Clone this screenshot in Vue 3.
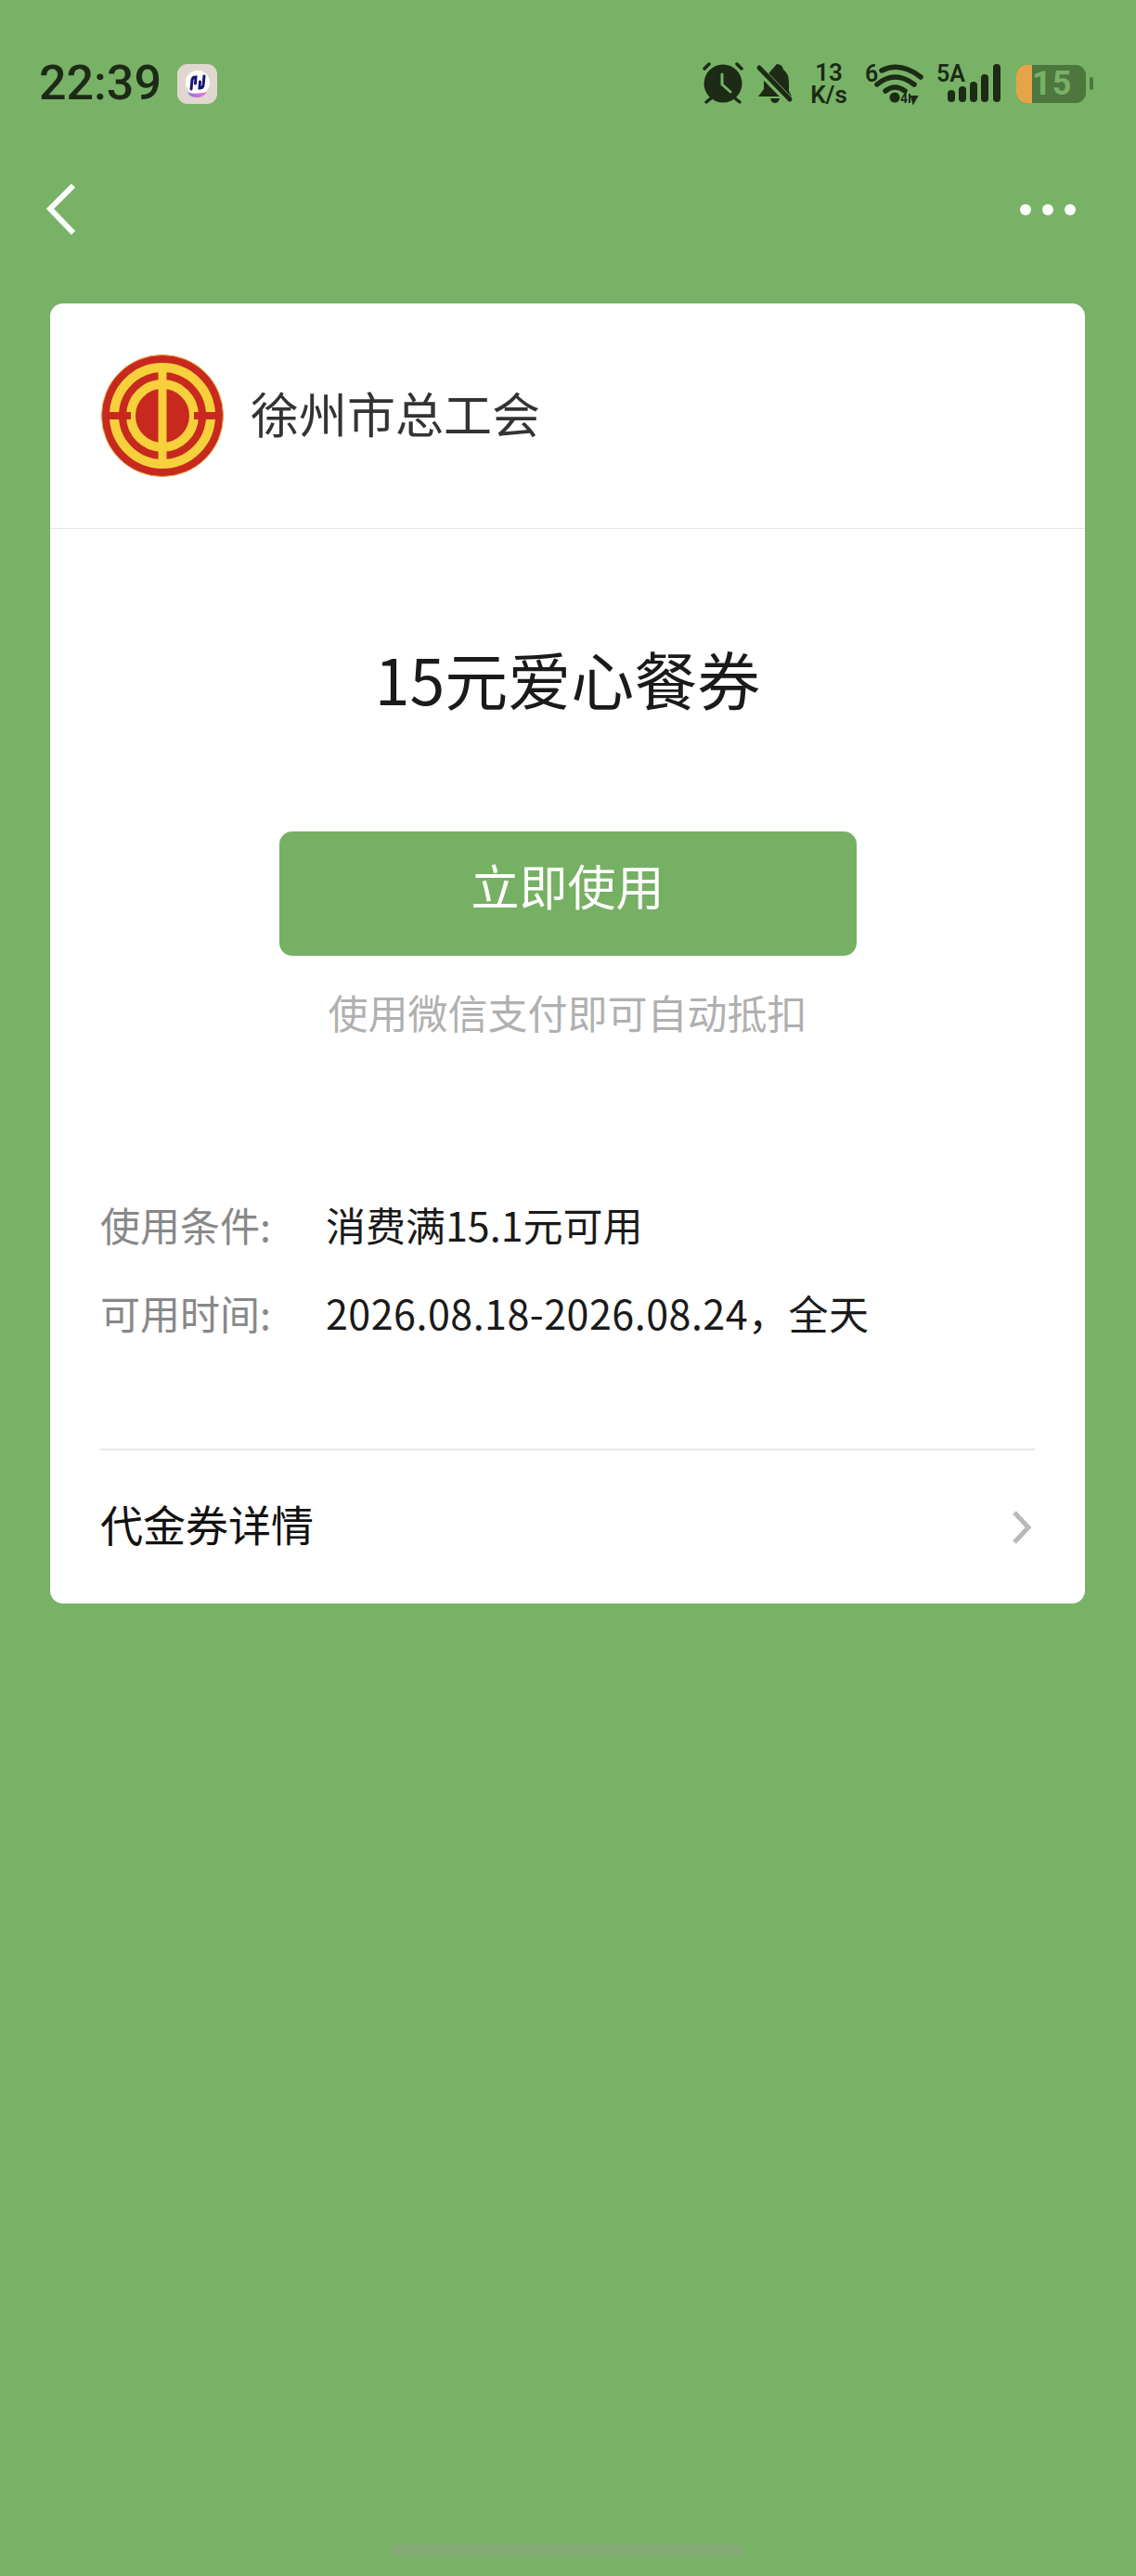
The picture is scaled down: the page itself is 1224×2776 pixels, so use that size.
<script setup>
const rows = [
  { label: "使用条件:", value: "消费满15.1元可用" },
  { label: "可用时间:", value: "2026.08.18-2026.08.24，全天" },
];
</script>

<template>
  <div class="page">
    <div class="status">
      <div class="status-left">
        <span class="time">22:39</span>
        <span class="app-icon">
          <svg width="43" height="43" viewBox="0 0 43 43">
            <defs>
              <linearGradient id="wave" x1="0" x2="1" y1="0" y2="0">
                <stop offset="0" stop-color="#7d7be8" />
                <stop offset="0.6" stop-color="#d36ce0" />
                <stop offset="1" stop-color="#e78fc8" />
              </linearGradient>
            </defs>
            <circle cx="22" cy="20" r="13" fill="#fff" />
            <path d="M15 27L16 17Q16.500 14 20 14L19.500 21" fill="none" stroke="#1a1570" stroke-width="3" stroke-linecap="round" />
            <path d="M29 13L28 23Q27.500 26 24 26L24.500 19" fill="none" stroke="#1a1570" stroke-width="3" stroke-linecap="round" />
            <path d="M11 31Q21 33 32 30Q29 36 21 36Q14 36 11 31Z" fill="url(#wave)" />
          </svg>
        </span>
      </div>
      <div class="status-right">
        <svg class="ic" width="42" height="44" viewBox="0 0 42 44">
          <circle cx="21" cy="22" r="20.500" fill="#1c2a16" />
          <path d="M20 12V23L29 31" fill="none" stroke="#78b266" stroke-width="3" stroke-linecap="round" stroke-linejoin="round" />
          <path d="M1 6L6 1M41 6L36 1" stroke="#1c2a16" stroke-width="3.500" stroke-linecap="round" />
          <path d="M3 42L8 38M39 42L34 38" stroke="#1c2a16" stroke-width="3.500" stroke-linecap="round" />
        </svg>
        <svg class="ic" width="38" height="44" viewBox="0 0 38 44">
          <path d="M21 1Q27 1 28 7Q34 11 34 21V30L37 36H1L7 28V17Z" fill="#1c2a16" />
          <path d="M14 38H24Q23 43 19 43Q15 43 14 38Z" fill="#1c2a16" />
          <path d="M0 5L36 42" stroke="#78b266" stroke-width="9" />
          <path d="M2 5L35 39" stroke="#1c2a16" stroke-width="5" stroke-linecap="round" />
        </svg>
        <div class="speed"><span>13</span><span>K/s</span></div>
        <svg class="ic" width="61" height="44" viewBox="0 0 61 44">
          <text x="0" y="20" class="net-text">6</text>
          <path d="M18 8Q38 -2 60 15" fill="none" stroke="#1c2a16" stroke-width="5.500" stroke-linecap="round" />
          <path d="M13 23Q32 7 53 23" fill="none" stroke="#1c2a16" stroke-width="5.500" stroke-linecap="round" />
          <path d="M22 30Q32 22 43 30" fill="none" stroke="#1c2a16" stroke-width="5.500" stroke-linecap="round" />
          <circle cx="32" cy="37" r="5.500" fill="#1c2a16" />
          <text x="38" y="43" class="tiny-text">4</text>
          <path d="M48 33V43M52 43L56 36H50Z" stroke="#1c2a16" stroke-width="2" fill="#1c2a16" />
        </svg>
        <svg class="ic" width="70" height="44" viewBox="0 0 70 44">
          <text x="0" y="20" class="net-text">5A</text>
          <rect x="12" y="29" width="8" height="13" rx="4" fill="#1c2a16" />
          <rect x="24" y="25" width="8" height="17" rx="4" fill="#1c2a16" />
          <rect x="36" y="20" width="8" height="22" rx="4" fill="#1c2a16" />
          <rect x="48" y="12" width="8" height="30" rx="4" fill="#1c2a16" />
          <rect x="61" y="1" width="8" height="41" rx="4" fill="#1c2a16" />
        </svg>
        <div class="battery">
          <div class="battery-body">
            <span class="battery-fill"></span>
            <span class="battery-num">15</span>
          </div>
          <span class="battery-nub"></span>
        </div>
      </div>
    </div>

    <div class="nav">
      <svg width="34" height="58" viewBox="0 0 34 58">
        <path d="M30 3L5 28L30 54" fill="none" stroke="#fff" stroke-width="6" />
      </svg>
      <div class="dots"><i></i><i></i><i></i></div>
    </div>

    <div class="card">
      <div class="card-head">
        <svg width="134" height="134" viewBox="0 0 134 134">
          <circle cx="67" cy="67" r="65.500" fill="#c8291f" stroke="#e8a23a" stroke-width="1" />
          <circle cx="67" cy="67" r="52" fill="none" stroke="#f7d13c" stroke-width="10" />
          <circle cx="67" cy="67" r="34" fill="none" stroke="#f7d13c" stroke-width="10" />
          <rect x="8" y="63" width="25" height="8" fill="#c8291f" />
          <rect x="101" y="63" width="25" height="8" fill="#c8291f" />
          <rect x="62.500" y="16" width="9" height="102" fill="#f7d13c" />
        </svg>
        <span class="org">徐州市总工会</span>
      </div>

      <div class="card-body">
        <h1 class="title">15元爱心餐券</h1>
        <button class="use-btn">立即使用</button>
        <p class="hint">使用微信支付即可自动抵扣</p>

        <div class="rows">
          <div v-for="row in rows" :key="row.label" class="row">
            <span class="row-label">{{ row.label }}</span>
            <span class="row-value">{{ row.value }}</span>
          </div>
        </div>

        <div class="detail">
          <span>代金券详情</span>
          <svg width="22" height="36" viewBox="0 0 22 36">
            <path d="M3 2L18 18L3 34" fill="none" stroke="#b9b9b9" stroke-width="5" />
          </svg>
        </div>
      </div>
    </div>

    <div class="home-bar"></div>
  </div>
</template>

<style>
body {
  background: #78b266;
}
</style>

<style scoped>
.page {
  position: relative;
  width: 1224px;
  height: 2776px;
  overflow: hidden;
  background: #78b266;
  font-family: "Noto Sans CJK SC", "Noto Sans", sans-serif;
}
.status {
  display: flex;
  justify-content: space-between;
  align-items: center;
  height: 44px;
  padding: 68px 46px 0 42px;
}
.status-left {
  display: flex;
  align-items: center;
  gap: 17px;
}
.time {
  font-family: Roboto, sans-serif;
  font-size: 52px;
  line-height: 44px;
  font-weight: 500;
  color: #1c2a16;
}
.app-icon {
  display: block;
  width: 43px;
  height: 43px;
  border-radius: 11px;
  background: #e0d8d0;
}
.app-icon svg,
.ic {
  display: block;
  overflow: visible;
}
.status-right {
  display: flex;
  align-items: center;
  gap: 16px;
}
.speed {
  display: flex;
  flex-direction: column;
  align-items: center;
  width: 42px;
  margin: 0 2px;
  font-family: Roboto, sans-serif;
  font-weight: 600;
  font-size: 26px;
  line-height: 24px;
  color: #1c2a16;
}
.net-text {
  font-family: Roboto, sans-serif;
  font-weight: 600;
  font-size: 25px;
  fill: #1c2a16;
}
.tiny-text {
  font-family: Roboto, sans-serif;
  font-weight: 700;
  font-size: 14px;
  fill: #1c2a16;
}
.battery {
  display: flex;
  align-items: center;
  gap: 4px;
}
.battery-body {
  position: relative;
  display: flex;
  align-items: center;
  width: 75px;
  height: 41px;
  border-radius: 11px;
  overflow: hidden;
  background: #4c773f;
}
.battery-fill {
  width: 17px;
  height: 100%;
  background: #e3a548;
}
.battery-num {
  font-family: Roboto, sans-serif;
  font-weight: 700;
  font-size: 36px;
  line-height: 41px;
  letter-spacing: 1px;
  color: #78b266;
}
.battery-nub {
  width: 4px;
  height: 14px;
  border-radius: 2px;
  background: #4c773f;
}
.nav {
  display: flex;
  justify-content: space-between;
  align-items: center;
  height: 58px;
  padding: 85px 65px 0 49px;
}
.nav svg {
  display: block;
}
.dots {
  display: flex;
  gap: 12px;
}
.dots i {
  display: block;
  width: 12px;
  height: 12px;
  border-radius: 50%;
  background: #fff;
}
.card {
  width: 1115px;
  margin: 72px 0 0 54px;
  border-radius: 14px;
  background: #fff;
}
.card-head {
  display: flex;
  align-items: center;
  gap: 28px;
  height: 242px;
  padding: 0 54px;
  border-bottom: 1px solid #e6e6e6;
}
.card-head svg {
  flex: none;
}
.org {
  margin-bottom: 7px;
  font-size: 52px;
  color: #333;
}
.card-body {
  display: flex;
  flex-direction: column;
  align-items: center;
  padding: 0 54px;
}
.title {
  margin: 121px 0 0;
  font-size: 68px;
  line-height: 80px;
  font-weight: 400;
  color: #1a1a1a;
}
.use-btn {
  width: 622px;
  height: 134px;
  margin-top: 125px;
  padding: 0 0 20px;
  border: 0;
  border-radius: 14px;
  background: #75b063;
  color: #fff;
  font-family: inherit;
  font-size: 52px;
}
.hint {
  margin: 30px 0 0;
  font-size: 43px;
  line-height: 60px;
  color: #b0b0b0;
}
.rows {
  display: flex;
  flex-direction: column;
  gap: 35px;
  width: 100%;
  margin-top: 169px;
}
.row {
  display: flex;
  font-size: 43px;
  line-height: 60px;
}
.row:last-child .row-value {
  letter-spacing: 0.5px;
}
.row-label {
  flex: none;
  width: 243px;
  color: #888;
}
.row-value {
  color: #1a1a1a;
}
.detail {
  display: flex;
  justify-content: space-between;
  align-items: center;
  width: 100%;
  height: 165px;
  margin-top: 117px;
  border-top: 2px solid #e8e8e8;
  font-size: 46px;
  color: #111;
}
.detail span {
  margin-bottom: 10px;
}
.detail svg {
  display: block;
  margin-right: 3px;
}
.home-bar {
  position: absolute;
  left: 423px;
  bottom: 21px;
  width: 377px;
  height: 13px;
  background: #83aa73;
}
</style>
